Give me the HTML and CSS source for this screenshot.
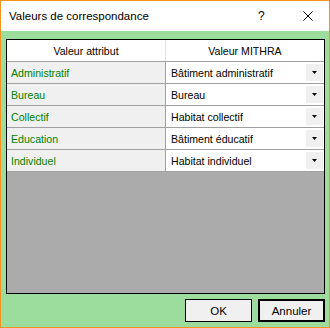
FILE: index.html
```html
<!DOCTYPE html>
<html lang="fr">
<head>
	<meta charset="UTF-8">
	<title>Valeurs de correspondance</title>
	<link rel="stylesheet" href="styles.css">
</head>
<body>
	<div class="window">
		<div class="titlebar">
			<span class="title">Valeurs de correspondance</span>
			<span class="help">?</span>
			<span class="close">
				<svg width="10" height="10" viewBox="0 0 10 10"><path d="M0.5 0.5L9.5 9.5M9.5 0.5L0.5 9.5" stroke="#000" stroke-width="1"/></svg>
			</span>
		</div>
		<div class="content">
			<!-- grille -->
			<div class="grid">
				<div class="row head">
					<div class="cell key">Valeur attribut</div>
					<div class="cell val">Valeur MITHRA</div>
				</div>
				<div class="row">
					<div class="cell key">Administratif</div>
					<div class="cell val"><span class="txt">Bâtiment administratif</span><span class="drop"><svg width="5" height="3" viewBox="0 0 5 3"><path d="M0 0H5L2.5 3z" fill="#000"/></svg></span></div>
				</div>
				<div class="row">
					<div class="cell key">Bureau</div>
					<div class="cell val"><span class="txt">Bureau</span><span class="drop"><svg width="5" height="3" viewBox="0 0 5 3"><path d="M0 0H5L2.5 3z" fill="#000"/></svg></span></div>
				</div>
				<div class="row">
					<div class="cell key">Collectif</div>
					<div class="cell val"><span class="txt">Habitat collectif</span><span class="drop"><svg width="5" height="3" viewBox="0 0 5 3"><path d="M0 0H5L2.5 3z" fill="#000"/></svg></span></div>
				</div>
				<div class="row">
					<div class="cell key">Education</div>
					<div class="cell val"><span class="txt">Bâtiment éducatif</span><span class="drop"><svg width="5" height="3" viewBox="0 0 5 3"><path d="M0 0H5L2.5 3z" fill="#000"/></svg></span></div>
				</div>
				<div class="row">
					<div class="cell key">Individuel</div>
					<div class="cell val"><span class="txt">Habitat individuel</span><span class="drop"><svg width="5" height="3" viewBox="0 0 5 3"><path d="M0 0H5L2.5 3z" fill="#000"/></svg></span></div>
				</div>
			</div>
			<!-- boutons -->
			<div class="buttons">
				<button class="btn">OK</button>
				<button class="btn default">Annuler</button>
			</div>
		</div>
	</div>
</body>
</html>
```

FILE: styles.css
```css
*{margin: 0;padding: 0;box-sizing: border-box;}
body{background: #fff;font-family: "Liberation Sans", Arial, sans-serif;}

.window{width: 330px;height: 328px;border: 1px solid #f6921e;display: flex;flex-direction: column;}

.titlebar{height: 30px;background: #fff;display: flex;align-items: center;padding-left: 8px;}
.title{font-size: 11.5px;color: #000;flex: 1;}
.help{font-size: 12px;width: 14px;margin-right: 31px;color: #000;}
.close{width: 10px;height: 10px;margin-right: 16px;display: flex;}

.content{flex: 1;background: #9cdc9c;padding: 8px 4px 0 5px;display: flex;flex-direction: column;}

.grid{height: 255px;border: 1px solid #000;background: #ababab;font-size: 10.6px;}
.row{display: flex;height: 22px;border-bottom: 1px solid #a0a0a0;}
.cell{height: 21px;display: flex;align-items: center;}
.cell.key{width: 159px;border-right: 1px solid #a0a0a0;background: #f0f0f0;color: #008000;padding-left: 4px;}
.cell.val{flex: 1;background: #fff;color: #000;padding-left: 5px;}
.txt{flex: 1;}
.drop{width: 17px;height: 17px;background: #f0f0f0;margin-right: 1px;display: flex;align-items: center;justify-content: center;}

.row.head .cell{background: #fff;color: #000;justify-content: center;padding-left: 0;}
.row.head .cell.key{border-right-color: #e3e3e3;}

.buttons{display: flex;justify-content: flex-end;gap: 6px;margin-top: 5px;}
.btn{width: 67px;height: 23px;background: #f0f0f0;border: 1px solid #000;font-family: "Liberation Sans", Arial, sans-serif;font-size: 11.5px;color: #000;}
.btn.default{border-width: 2px;}
```
